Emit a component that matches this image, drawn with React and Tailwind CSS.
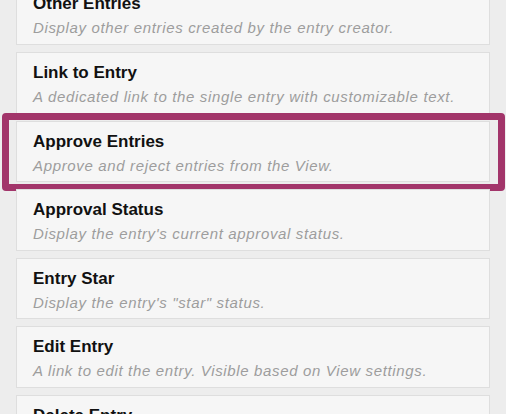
import React from "react";

const items = [
  { title: "Other Entries", desc: "Display other entries created by the entry creator." },
  { title: "Link to Entry", desc: "A dedicated link to the single entry with customizable text." },
  { title: "Approve Entries", desc: "Approve and reject entries from the View.", active: true },
  { title: "Approval Status", desc: "Display the entry's current approval status." },
  { title: "Entry Star", desc: "Display the entry's \"star\" status." },
  { title: "Edit Entry", desc: "A link to edit the entry. Visible based on View settings." },
  { title: "Delete Entry", desc: "A link to delete the entry. Visible based on View settings." },
];

const Card = ({ title, desc, active }) => (
  <div className="relative h-[61.6px] shrink-0 border border-[#dedede] bg-[#f6f6f6] pl-[16px] pt-[9px]">
    <div className="text-[17px] font-semibold leading-[22px] text-[#111]">{title}</div>
    <div className="mt-[3px] whitespace-nowrap text-[15px] italic leading-[19px] tracking-[0.65px] text-[#9d9d9d]">
      {desc}
    </div>
    {active && (
      <div className="pointer-events-none absolute -top-[9px] -bottom-[10px] -left-[15px] -right-[16px] rounded-[4px] border-[7px] border-[#a2356a]" />
    )}
  </div>
);

export default function App() {
  return (
    <div
      className="h-[414px] w-[506px] overflow-hidden bg-[#ededed]"
      style={{ fontFamily: "'Liberation Sans', Arial, sans-serif" }}
    >
      <div className="-mt-[16.6px] flex flex-col gap-[7px] px-[16px]">
        {items.map((it) => (
          <Card key={it.title} {...it} />
        ))}
      </div>
    </div>
  );
}
